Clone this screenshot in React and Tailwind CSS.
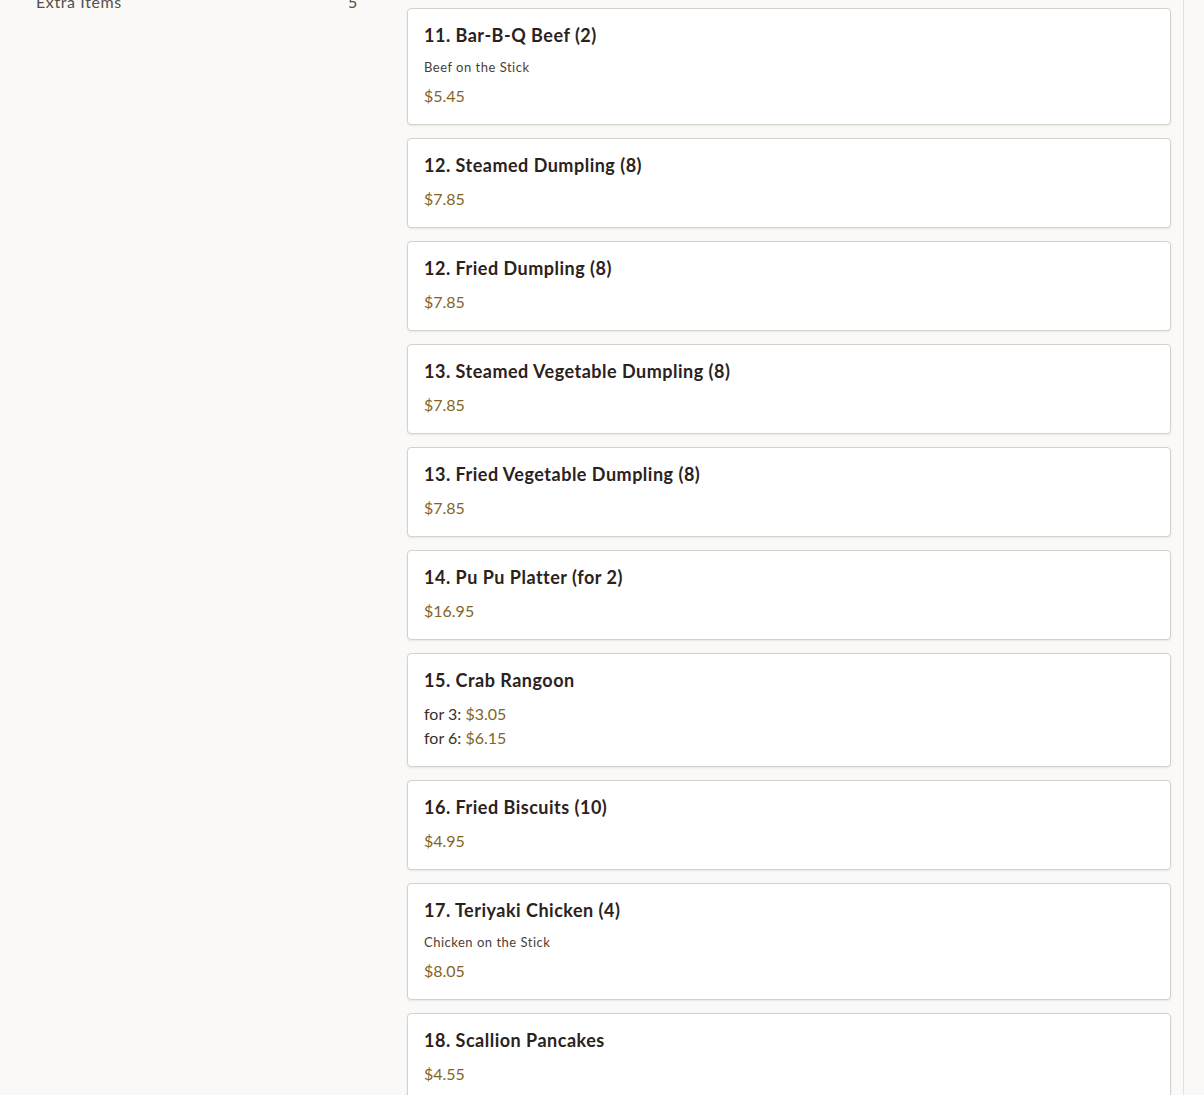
const items = [
  { name: '11. Bar-B-Q Beef (2)', desc: 'Beef on the Stick', prices: [{ price: '$5.45' }] },
  { name: '12. Steamed Dumpling (8)', prices: [{ price: '$7.85' }] },
  { name: '12. Fried Dumpling (8)', prices: [{ price: '$7.85' }] },
  { name: '13. Steamed Vegetable Dumpling (8)', prices: [{ price: '$7.85' }] },
  { name: '13. Fried Vegetable Dumpling (8)', prices: [{ price: '$7.85' }] },
  { name: '14. Pu Pu Platter (for 2)', prices: [{ price: '$16.95' }] },
  {
    name: '15. Crab Rangoon',
    prices: [
      { label: 'for 3:', price: '$3.05' },
      { label: 'for 6:', price: '$6.15' },
    ],
  },
  { name: '16. Fried Biscuits (10)', prices: [{ price: '$4.95' }] },
  { name: '17. Teriyaki Chicken (4)', desc: 'Chicken on the Stick', prices: [{ price: '$8.05' }] },
  { name: '18. Scallion Pancakes', prices: [{ price: '$4.55' }] },
];

const MenuCard = ({ item }) => (
  <div className="bg-white border border-[#d5d1cb] rounded-[4px] shadow-[0_1px_2px_rgba(0,0,0,0.08)] px-4 py-4">
    <h3 className="text-[18px] leading-[20px] tracking-[0.5px] font-bold text-[#2b221d]">{item.name}</h3>
    {item.desc && (
      <p className="mt-[12px] text-[13px] leading-[20px] tracking-[0.5px] text-[#4a3f38]">{item.desc}</p>
    )}
    <div className={item.desc ? 'mt-[7px]' : 'mt-[12px]'}>
      {item.prices.map((p, i) => (
        <div key={i} className="text-[16px] leading-6">
          {p.label && <span className="text-[#3a302a]">{p.label} </span>}
          <span className="text-[#84651f]">{p.price}</span>
        </div>
      ))}
    </div>
  </div>
);

export default function App() {
  return (
    <div
      className="h-[1095px] overflow-hidden bg-[#faf9f7] flex"
      style={{ fontFamily: 'Lato, "Noto Sans", sans-serif' }}
    >
      {/* sidebar */}
      <aside className="w-[395px] shrink-0 pl-9 pr-[37px]">
        <div className="mt-[-10px] flex items-center justify-between text-[16px] leading-6 tracking-[0.6px] text-[#555049]">
          <span>Extra Items</span>
          <span>5</span>
        </div>
      </aside>

      {/* menu list */}
      <main className="flex-1 pl-3 pr-[12px] pt-2 flex flex-col gap-[13px]">
        {items.map((item) => (
          <MenuCard key={item.name + item.prices[0].price} item={item} />
        ))}
      </main>

      <div className="w-[21px] shrink-0 border-l border-[#e4e1dc]" />
    </div>
  );
}
